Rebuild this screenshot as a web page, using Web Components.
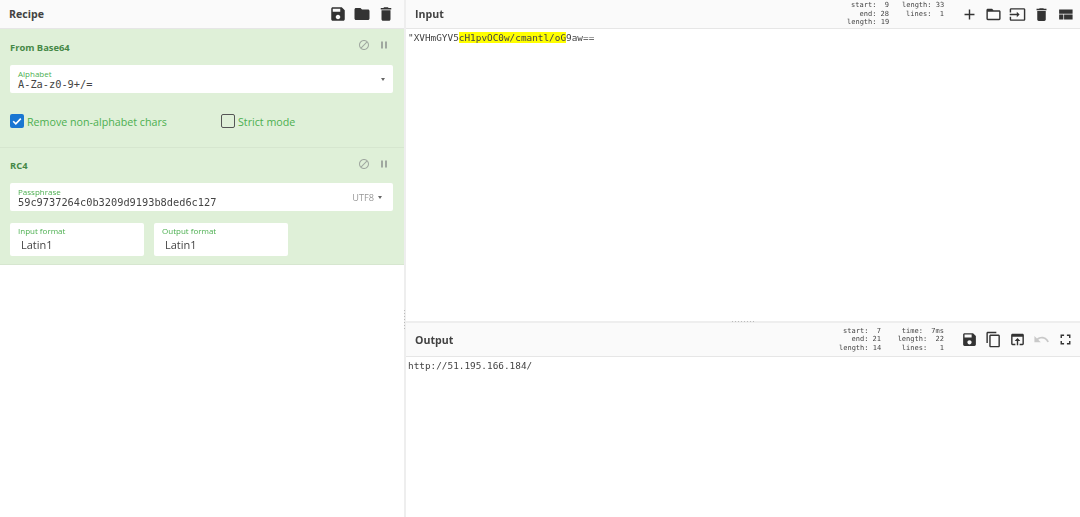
<!DOCTYPE html>
<html>
<head>
<meta charset="utf-8">
<title>CyberChef</title>
<style>
  html, body { margin: 0; height: 100%; background: #fff; overflow: hidden; }
  body { font-family: "Open Sans", "Liberation Sans", sans-serif; }
</style>
</head>
<body>
<chef-app>
  <chef-pane slot="recipe" title="Recipe" style="--bar-pad: 6px">
    <app-icon slot="actions" name="save" size="18" gap="6"></app-icon>
    <app-icon slot="actions" name="folder" size="18" gap="6"></app-icon>
    <app-icon slot="actions" name="delete" size="18" gap="6"></app-icon>

    <chef-op heading="From Base64" style="--op-h: 119px; --head-h: 36px">
      <chef-field label="Alphabet" value="A-Za-z0-9+/=" trail="caret"></chef-field>
      <div style="display:flex; padding-top:21px; height:14px; align-items:center">
        <chef-check label="Remove non-alphabet chars" checked style="width:211px"></chef-check>
        <chef-check label="Strict mode"></chef-check>
      </div>
    </chef-op>
    <chef-op heading="RC4" style="--op-h: 117px; --head-h: 35px">
      <chef-field label="Passphrase" value="59c9737264c0b3209d9193b8ded6c127" trail="UTF8"></chef-field>
      <div style="display:flex; gap:10px; padding-top:12px">
        <chef-field label="Input format" value="Latin1" plain style="width:134px"></chef-field>
        <chef-field label="Output format" value="Latin1" plain style="width:134px"></chef-field>
      </div>
    </chef-op>
  </chef-pane>

  <chef-pane slot="input" title="Input">
    <chef-stats slot="stats" lines="start:  9|end: 28|length: 19" width="42"></chef-stats>
    <chef-stats slot="stats" lines="length: 33|lines:  1" width="42"></chef-stats>
    <app-icon slot="actions" name="add"></app-icon>
    <app-icon slot="actions" name="folderOpen"></app-icon>
    <app-icon slot="actions" name="input"></app-icon>
    <app-icon slot="actions" name="delete"></app-icon>
    <app-icon slot="actions" name="compact"></app-icon>
    <chef-text>"XVHmGYV5<mark>cH1pvOC0w/cmantl/oG</mark>9aw==</chef-text>
  </chef-pane>

  <chef-pane slot="output" title="Output">
    <chef-stats slot="stats" lines="start:  7|end: 21|length: 14" width="42"></chef-stats>
    <chef-stats slot="stats" lines="time:  7ms|length:  22|lines:   1" width="50"></chef-stats>
    <app-icon slot="actions" name="save"></app-icon>
    <app-icon slot="actions" name="copy"></app-icon>
    <app-icon slot="actions" name="openBrowser"></app-icon>
    <app-icon slot="actions" name="undo" color="#c9c9c9"></app-icon>
    <app-icon slot="actions" name="fullscreen"></app-icon>
    <chef-text>http://51.195.166.184/</chef-text>
  </chef-pane>
</chef-app>

<script>
const ICONS = {
  save: "M17 3H5c-1.11 0-2 .9-2 2v14c0 1.1.89 2 2 2h14c1.1 0 2-.9 2-2V7l-4-4zm-5 16c-1.66 0-3-1.34-3-3s1.34-3 3-3 3 1.34 3 3-1.34 3-3 3zm3-10H5V5h10v4z",
  folder: "M10 4H4c-1.1 0-1.99.9-1.99 2L2 18c0 1.1.9 2 2 2h16c1.1 0 2-.9 2-2V8c0-1.1-.9-2-2-2h-8l-2-2z",
  delete: "M6 19c0 1.1.9 2 2 2h8c1.1 0 2-.9 2-2V7H6v12zM19 4h-3.5l-1-1h-5l-1 1H5v2h14V4z",
  add: "M19 13h-6v6h-2v-6H5v-2h6V5h2v6h6v2z",
  folderOpen: "M20 6h-8l-2-2H4c-1.1 0-1.99.9-1.99 2L2 18c0 1.1.9 2 2 2h16c1.1 0 2-.9 2-2V8c0-1.1-.9-2-2-2zm0 12H4V8h16v10z",
  input: "M21 3.01H3c-1.1 0-2 .9-2 2V9h2V4.99h18v14.03H3V15H1v4.01c0 1.1.9 1.98 2 1.98h18c1.1 0 2-.88 2-1.98v-14c0-1.11-.9-2-2-2zM11 16l4-4-4-4v3H1v2h10v3z",
  compact: "M3 19h6v-7H3v7zm7 0h12v-7H10v7zM3 5v6h19V5H3z",
  copy: "M16 1H4c-1.1 0-2 .9-2 2v14h2V3h12V1zm3 4H8c-1.1 0-2 .9-2 2v14c0 1.1.9 2 2 2h11c1.1 0 2-.9 2-2V7c0-1.1-.9-2-2-2zm0 16H8V7h11v14z",
  openBrowser: "M19 4H5c-1.11 0-2 .9-2 2v12c0 1.1.89 2 2 2h4v-2H5V8h14v10h-4v2h4c1.1 0 2-.9 2-2V6c0-1.1-.89-2-2-2zm-7 6l-4 4h3v6h2v-6h3l-4-4z",
  undo: "M12.5 8c-2.65 0-5.05.99-6.9 2.6L2 7v9h9l-3.62-3.62c1.39-1.16 3.16-1.88 5.12-1.88 3.54 0 6.55 2.31 7.6 5.5l2.37-.78C21.08 11.03 17.15 8 12.5 8z",
  fullscreen: "M7 14H5v5h5v-2H7v-3zm-2-4h2V7h3V5H5v5zm12 7h-3v2h5v-5h-2v3zM14 5v2h3v3h2V5h-5z",
  block: "M12 2C6.48 2 2 6.48 2 12s4.48 10 10 10 10-4.48 10-10S17.52 2 12 2zM4 12c0-4.42 3.58-8 8-8 1.85 0 3.55.63 4.9 1.69L5.69 16.9C4.63 15.55 4 13.85 4 12zm8 8c-1.85 0-3.55-.63-4.9-1.69L18.31 7.1C19.37 8.45 20 10.15 20 12c0 4.42-3.58 8-8 8z",
  pause: "M6 19h4V5H6v14zm8-14v14h4V5h-4z",
};

class AppIcon extends HTMLElement {
  connectedCallback() {
    const size = this.getAttribute("size") || 17;
    const gap = this.getAttribute("gap") || 7;
    const color = this.getAttribute("color") || "#333";
    const name = this.getAttribute("name");
    this.attachShadow({ mode: "open" }).innerHTML = `
      <style>
        :host { display: block; margin: 0 ${gap / 2}px; line-height: 0; }
        svg { width: ${size}px; height: ${size}px; fill: ${color}; }
      </style>
      <svg viewBox="0 0 24 24"><path d="${ICONS[name]}"/></svg>`;
  }
}

class ChefStats extends HTMLElement {
  connectedCallback() {
    const rows = this.getAttribute("lines").split("|");
    this.attachShadow({ mode: "open" }).innerHTML = `
      <style>
        :host {
          display: block;
          width: ${this.getAttribute("width")}px;
          font: 7px/8.5px "DejaVu Sans Mono", monospace;
          color: #444;
          text-align: right;
        }
        div { white-space: pre; }
      </style>
      ${rows.map((r) => `<div>${r}</div>`).join("")}`;
  }
}

class ChefPane extends HTMLElement {
  connectedCallback() {
    this.attachShadow({ mode: "open" }).innerHTML = `
      <style>
        :host { display: flex; flex-direction: column; height: 100%; min-height: 0; }
        header {
          flex: none;
          display: flex;
          align-items: center;
          height: var(--bar-h, 28px);
          padding: 0 var(--bar-pad, 3px) 0 9px;
          background: #fafafa;
          border-bottom: 1px solid #e6e6e6;
        }
        h2 { margin: 0; flex: 1; font: 700 10.6px "Open Sans", sans-serif; color: #424242; }
        .stats { display: flex; gap: 13px; margin-right: 13px; }
        .actions { display: flex; align-items: center; }
        main { flex: 1; min-height: 0; }
      </style>
      <header>
        <h2>${this.getAttribute("title")}</h2>
        <div class="stats"><slot name="stats"></slot></div>
        <div class="actions"><slot name="actions"></slot></div>
      </header>
      <main><slot></slot></main>`;
    this.removeAttribute("title");
  }
}

class ChefOp extends HTMLElement {
  connectedCallback() {
    this.attachShadow({ mode: "open" }).innerHTML = `
      <style>
        :host {
          display: block;
          height: var(--op-h);
          box-sizing: border-box;
          padding: 0 11px 0 10px;
          background: #dff0d8;
          border-bottom: 1px solid #d6e6cf;
        }
        .head { display: flex; align-items: center; height: var(--head-h); }
        h3 { flex: 1; margin: 0; font: 700 9.4px "Open Sans", sans-serif; color: #468847; }
        .ctl { display: flex; gap: 8px; margin-right: 3.5px; margin-top: -4px; }
      </style>
      <div class="head">
        <h3>${this.getAttribute("heading")}</h3>
        <div class="ctl">
          <app-icon name="block" size="12" gap="0" color="#a0a8a0"></app-icon>
          <app-icon name="pause" size="12" gap="0" color="#a0a8a0"></app-icon>
        </div>
      </div>
      <slot></slot>`;
  }
}

class ChefField extends HTMLElement {
  connectedCallback() {
    const trail = this.getAttribute("trail");
    const plain = this.hasAttribute("plain");
    let end = "";
    if (trail === "caret") end = `<i class="caret"></i>`;
    else if (trail) end = `<span class="enc">${trail}<i class="caret"></i></span>`;
    this.attachShadow({ mode: "open" }).innerHTML = `
      <style>
        :host {
          display: flex;
          align-items: center;
          box-sizing: border-box;
          height: ${plain ? 33 : 28}px;
          padding: 0 7px 0 8px;
          background: #fff;
          border-radius: 2px;
        }
        .main { flex: 1; }
        label { display: block; font: 8px/10px "Open Sans", sans-serif; color: #4caf50; }
        .val {
          font: 10.3px/11px "DejaVu Sans Mono", monospace;
          color: #444;
          white-space: pre;
        }
        .val.plain { font: 11px/17px "Open Sans", sans-serif; padding-left: 3px; }
        .enc { font: 9.2px "Open Sans", sans-serif; color: #999; display: flex; align-items: center; margin-right: 3px; }
        .caret {
          display: inline-block;
          margin: 0 1px 0 4px;
          border-top: 3px solid #666;
          border-left: 2.5px solid transparent;
          border-right: 2.5px solid transparent;
        }
      </style>
      <div class="main">
        <label>${this.getAttribute("label")}</label>
        <div class="val${plain ? " plain" : ""}">${this.getAttribute("value")}</div>
      </div>
      ${end}`;
  }
}

class ChefCheck extends HTMLElement {
  connectedCallback() {
    const on = this.hasAttribute("checked");
    this.attachShadow({ mode: "open" }).innerHTML = `
      <style>
        :host { display: flex; align-items: center; gap: 3px; font: 10.7px "Open Sans", sans-serif; color: #4caf50; white-space: nowrap; }
        .box {
          box-sizing: border-box;
          width: 14px;
          height: 14px;
          border-radius: 2px;
          display: block;
          ${on ? "background: #1976d2;" : "border: 1.5px solid #555;"}
        }
        .txt { padding-top: 1px; }
      </style>
      <span class="box">${on ? `<svg viewBox="0 0 14 14" width="14" height="14"><path d="M3.2 7.2l2.6 2.6 5-5.2" fill="none" stroke="#fff" stroke-width="1.6"/></svg>` : ""}</span>
      <span class="txt">${this.getAttribute("label")}</span>`;
  }
}

class ChefText extends HTMLElement {
  constructor() {
    super();
    this.attachShadow({ mode: "open" }).innerHTML = `
      <style>
        :host {
          display: block;
          padding: 3px 2px;
          font: 9.4px/12px "DejaVu Sans Mono", monospace;
          color: #444;
        }
        div { white-space: pre; }
        ::slotted(mark) { background: #ffff00; color: #444; }
      </style>
      <div><slot></slot></div>`;
  }
}

class ChefApp extends HTMLElement {
  constructor() {
    super();
    this.attachShadow({ mode: "open" }).innerHTML = `
      <style>
        :host {
          display: grid;
          grid-template-columns: 404px 2px 1fr;
          grid-template-rows: 321px 2px 1fr;
          height: 100vh;
          filter: blur(0.4px);
        }
        .left { grid-row: 1 / 4; grid-column: 1; min-height: 0; }
        .vbar { grid-row: 1 / 4; grid-column: 2; background: #eee; position: relative; }
        .top { grid-row: 1; grid-column: 3; min-height: 0; }
        .hbar { grid-row: 2; grid-column: 3; background: #eee; position: relative; }
        .bottom { grid-row: 3; grid-column: 3; min-height: 0; --bar-h: 33px; }
        .vbar::after {
          content: "";
          position: absolute;
          left: 0;
          top: 310px;
          width: 1px;
          height: 20px;
          background: repeating-linear-gradient(180deg, #bbb 0 1px, transparent 1px 3px);
        }
        .hbar::after {
          content: "";
          position: absolute;
          left: 326px;
          top: 0;
          width: 22px;
          height: 1px;
          background: repeating-linear-gradient(90deg, #bbb 0 1px, transparent 1px 3px);
        }
      </style>
      <div class="left"><slot name="recipe"></slot></div>
      <div class="vbar"></div>
      <div class="top"><slot name="input"></slot></div>
      <div class="hbar"></div>
      <div class="bottom"><slot name="output"></slot></div>`;
  }
}

customElements.define("app-icon", AppIcon);
customElements.define("chef-stats", ChefStats);
customElements.define("chef-pane", ChefPane);
customElements.define("chef-op", ChefOp);
customElements.define("chef-field", ChefField);
customElements.define("chef-check", ChefCheck);
customElements.define("chef-text", ChefText);
customElements.define("chef-app", ChefApp);
</script>
</body>
</html>
